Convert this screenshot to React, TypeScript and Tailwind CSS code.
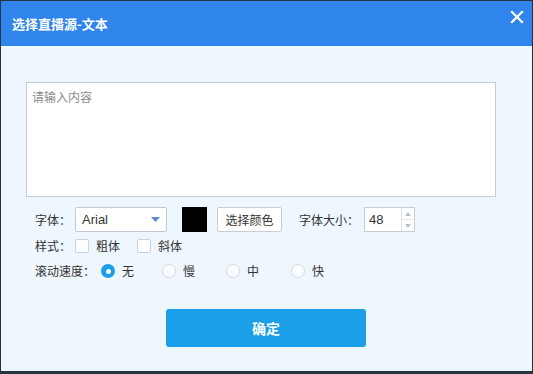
import React from "react";

const cjk = { fontFamily: '"Noto Sans CJK SC", "Noto Sans", sans-serif' };

function Radio({ checked, label, width }: { checked?: boolean; label: string; width: string }) {
  return (
    <div className={`flex items-center ${width}`}>
      {checked ? (
        <span className="w-[14px] h-[14px] rounded-full bg-[#1a9ee8] flex items-center justify-center">
          <span className="w-[5px] h-[5px] rounded-full bg-white" />
        </span>
      ) : (
        <span className="w-[14px] h-[14px] rounded-full border border-[#d3d9e0] bg-[#fbfcfd]" />
      )}
      <span className="ml-[7px] text-[12px] text-[#333]">{label}</span>
    </div>
  );
}

function Check({ label, width }: { label: string; width: string }) {
  return (
    <div className={`flex items-center ${width}`}>
      <span className="w-[14px] h-[14px] rounded-[2px] border border-[#c9d1da] bg-white" />
      <span className="ml-[7px] text-[12px] text-[#333]">{label}</span>
    </div>
  );
}

export default function App() {
  return (
    <div
      className="w-[533px] h-[374px] flex flex-col bg-[#eef6fe] border border-[#25333f] border-b-[3px] overflow-hidden"
      style={cjk}
    >
      <div className="h-[45px] bg-[#2f85eb] flex items-center justify-between pl-[11px] pr-[8px] shrink-0">
        <span className="text-white text-[13px] font-bold leading-none">选择直播源-文本</span>
        <svg width="14" height="14" viewBox="0 0 14 14" className="-mt-[13px]">
          <path d="M2 2 L12 12 M12 2 L2 12" stroke="white" strokeWidth="2.2" strokeLinecap="square" />
        </svg>
      </div>
      <div className="flex flex-col pl-[25px] pt-[36px]">
        <div className="w-[470px] h-[115px] bg-white border border-[#c4cdd8] px-[5px] pt-[6px]">
          <div className="text-[12px] leading-[16px] text-[#8a8a8a]">请输入内容</div>
        </div>
        <div className="flex items-center h-[25px] mt-[10px] pl-[9px]">
          <span className="text-[12px] text-[#333] w-[40px]">字体：</span>
          <div className="w-[92px] h-[25px] bg-white border border-[#bfcbd8] rounded-[2px] flex items-center justify-between pl-[6px] pr-[6px]">
            <span className="text-[13px] text-[#333]" style={{ fontFamily: '"Liberation Sans", Arial, sans-serif' }}>Arial</span>
            <svg width="9" height="5" viewBox="0 0 9 5">
              <path d="M0 0 L9 0 L4.5 5 Z" fill="#5b8dc6" />
            </svg>
          </div>
          <div className="w-[25px] h-[25px] bg-black ml-[15px]" />
          <div className="h-[25px] w-[65px] ml-[10px] bg-white border border-[#c4cdd8] rounded-[2px] flex items-center justify-center">
            <span className="text-[12px] text-[#333]">选择颜色</span>
          </div>
          <span className="text-[12px] text-[#333] ml-[17px] w-[65px]">字体大小：</span>
          <div className="w-[51px] h-[25px] bg-white border border-[#c4cdd8] flex">
            <div className="flex-1 flex items-center pl-[4px]">
              <span className="text-[13px] text-[#333]" style={{ fontFamily: '"Liberation Sans", Arial, sans-serif' }}>48</span>
            </div>
            <div className="w-[13px] border-l border-[#dde3ea] flex flex-col">
              <div className="flex-1 flex items-center justify-center border-b border-[#e6eaef]">
                <svg width="6" height="4" viewBox="0 0 6 4"><path d="M0 4 L6 4 L3 0 Z" fill="#b7bfc8" /></svg>
              </div>
              <div className="flex-1 flex items-center justify-center">
                <svg width="6" height="4" viewBox="0 0 6 4"><path d="M0 0 L6 0 L3 4 Z" fill="#b7bfc8" /></svg>
              </div>
            </div>
          </div>
        </div>
        <div className="flex items-center h-[24px] mt-[2px] pl-[9px]">
          <span className="text-[12px] text-[#333] w-[40px]">样式：</span>
          <Check label="粗体" width="w-[62px]" />
          <Check label="斜体" width="w-[62px]" />
        </div>
        <div className="flex items-center h-[26px] pl-[9px]">
          <span className="text-[12px] text-[#333] w-[66px]">滚动速度：</span>
          <Radio checked label="无" width="w-[61px]" />
          <Radio label="慢" width="w-[64px]" />
          <Radio label="中" width="w-[65px]" />
          <Radio label="快" width="w-[60px]" />
        </div>
        <div className="mt-[25px] ml-[140px] w-[200px] h-[38px] bg-[#1a9fe8] rounded-[3px] flex items-center justify-center">
          <span className="text-white text-[14px] font-bold">确定</span>
        </div>
      </div>
    </div>
  );
}
